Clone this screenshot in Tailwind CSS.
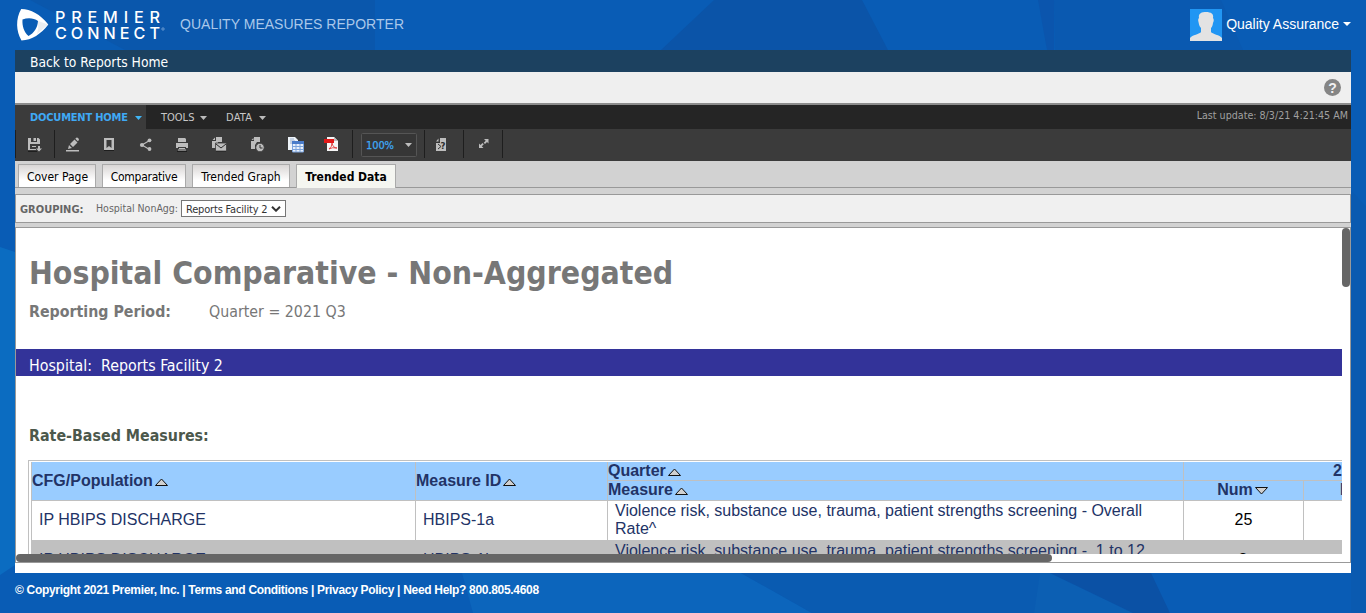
<!DOCTYPE html>
<html lang="en">
<head>
<meta charset="utf-8">
<title>Quality Measures Reporter</title>
<script src="https://cdn.jsdelivr.net/npm/@tailwindcss/browser@4"></script>
</head>
<body class="relative h-[613px] w-[1366px] overflow-hidden bg-[#0a5cb5] font-['Liberation_Sans',sans-serif]">
<svg class="absolute inset-0 -z-0" width="1366" height="613" aria-hidden="true">
  <rect width="1366" height="613" fill="#095cb5"/>
  <path d="M30 0H375V50H125Z" fill="#0a57ac"/>
  <path d="M714 0H862L888 50H661Z" fill="#0b54a8"/>
  <path d="M1038 0H1054V50H1047Z" fill="#0b55ad"/>
  <path d="M1054 0H1221L1243 50H1055Z" fill="#0a59b0"/>
  <path d="M0 247L15 252V565L0 575Z" fill="#0b6cc1"/>
  <path d="M1351 190L1366 207V613H1351Z" fill="#0a5ab0"/>
  <path d="M462 573H741L812 613H473Z" fill="#0c65bc"/>
  <path d="M741 573H1050L1130 613H812Z" fill="#0a5bb1"/>
  <path d="M1040 573H1050L1133 613H1034Z" fill="#0c5fb3"/>
  <path d="M1050 573H1151L1170 613H1133Z" fill="#0b51a5"/>
</svg>
<div class="relative flex h-[613px] flex-col px-[15px]">
  <header class="flex h-[50px] shrink-0 items-start">
    <svg class="mt-2 h-[34px] w-[150px] shrink-0" viewBox="15 8 150 34">
      <path fill="#fff" fill-rule="evenodd" d="M21.2 9C31 9.300 40 14 48.300 24.500C41 34 32 40 21.500 40.500C16 31 15.500 19 21.200 9ZM22.500 19.500C28 17.300 34 18 38 21C37.500 28 34 33 28.500 36C24 32 22 26 22.500 19.500Z"/>
      <path fill="#d6dbe4" d="M38 21L48 24.500L37 34Q39 28 38 21Z" opacity=".5"/>
      <g fill="#fff" font-family="Inter,sans-serif" font-size="16.200" font-weight="500">
        <text x="55" y="23.300" textLength="105">PREMIER</text>
        <text x="55" y="38.500" textLength="105">CONNECT</text>
      </g>
      <circle cx="163" cy="29" r="1.200" fill="none" stroke="#9fc0e4" stroke-width=".6"/>
    </svg>
    <div class="ml-[15px] mt-[14px] text-[14px] leading-5 tracking-[0.02px] whitespace-nowrap text-[#a9c8ea]">QUALITY MEASURES REPORTER</div>
    <div class="ml-auto flex pt-[9px]">
      <svg class="h-8 w-8" viewBox="0 0 32 32"><rect width="32" height="32" fill="#2196f3"/><path fill="#e3e3e3" d="M0 32V29C2 26 10 25 11 23V19C9 17 9 15 8.500 13C8 11 8 10 9 9C8 4 12 3 16 3C21 3 24 5 23 9C24 10 24 12 23 14C22.500 17 22 18 21 19V23C22 25 30 26 32 29V32Z"/></svg>
      <span class="ml-1 mt-[5px] text-[14px] leading-5 whitespace-nowrap text-white">Quality Assurance</span>
      <svg class="ml-1 mt-[13px] h-1 w-2" viewBox="0 0 8 4"><path d="M0 0H8L4 4Z" fill="#fff"/></svg>
    </div>
  </header>
  <main class="flex h-[523px] w-[1336px] shrink-0 flex-col bg-white font-['DejaVu_Sans_Condensed','DejaVu_Sans',sans-serif]">
    <nav class="h-[22px] shrink-0 bg-[#1c4160] pl-[15px] text-[13.750px] leading-[24px] text-white"><a>Back to Reports Home</a></nav>
    <div class="flex h-[33px] shrink-0 items-start justify-end border-b-2 border-[#8c8c8c] bg-[#efefef] pr-[10px] pt-[7px]">
      <svg class="h-[17px] w-[17px]" viewBox="0 0 17 17"><circle cx="8.500" cy="8.500" r="8.500" fill="#858585"/><text x="8.500" y="13.500" text-anchor="middle" font-family="Liberation Sans" font-size="14" font-weight="700" fill="#f1f1f1">?</text></svg>
    </div>
    <div class="flex h-[24px] shrink-0 items-stretch bg-[#252525] text-[11px] leading-[25px] text-[#c8c8c8]">
      <div class="flex w-[131px] items-center bg-[#3b3b3b] pl-[15px] font-bold text-[#3fa9f5]"><span class="tracking-[-0.2px] whitespace-nowrap">DOCUMENT HOME</span><svg class="ml-auto mr-1 mt-px h-1 w-[7px]" viewBox="0 0 7 4"><path d="M0 0H7L3.500 4Z" fill="#3fb5f5"/></svg></div>
      <div class="flex w-[65px] items-center pl-[15px]"><span>TOOLS</span><svg class="ml-auto mr-1 mt-px h-1 w-[7px]" viewBox="0 0 7 4"><path d="M0 0H7L3.500 4Z" fill="#bbb"/></svg></div>
      <div class="flex w-[59px] items-center pl-[15px]"><span class="tracking-[0.2px]">DATA</span><svg class="ml-auto mr-1 mt-px h-1 w-[7px]" viewBox="0 0 7 4"><path d="M0 0H7L3.500 4Z" fill="#bbb"/></svg></div>
      <div class="ml-auto pr-[3px] text-[10.640px] leading-[21px] whitespace-nowrap text-[#a0a0a0]">Last update: 8/3/21 4:21:45 AM</div>
    </div>
    <div class="flex h-[32px] shrink-0 bg-[#3b3b3b]">
      <svg class="h-8 w-[500px]" viewBox="15 129 500 32" fill="#bdbdbd">
        <g fill="#1e1e1e"><path d="M15 130h1v28h-1zM54 130h1v28h-1zM352 130h1v28h-1zM424 130h1v28h-1zM463 130h1v28h-1zM502 130h1v28h-1z"/></g>
        <path fill-rule="evenodd" d="M28 138h3v4h6v-4h1.500l1.500 1.500v4.500h-10v5h6v1h-8zM33.500 138h2.500v3h-2.500zM32 146h4v1h-4zM38 146h2v2.500h2l-3 3l-3-3h2z"/><path d="M28 151h9v1h-9z" fill="#1e1e1e"/>
        <path d="M66 150h13v1.500h-13zM68 149l1-4l3 3zM70 144l4.500-4.500l3 3l-4.500 4.500zM75.300 138.700l1-1q1-.5 2 .5t.5 2l-1 1z"/>
        <path fill-rule="evenodd" d="M104 138h10v12h-10zM106.500 140v8l2.500-2l2.500 2v-8z"/><path d="M104 150h10v1h-10z" fill="#1e1e1e"/>
        <path d="M142 145L149.500 140.500M142 145L149.500 149.500" stroke="#bdbdbd" stroke-width="1.100"/><circle cx="142" cy="145" r="2.100"/><circle cx="149.500" cy="140.300" r="1.900"/><circle cx="149.500" cy="149" r="1.900"/>
        <path fill-rule="evenodd" d="M178 138h7l1 1v3h-8zM176 143h12v5h-2v-1h-8v1h-2zM179 148h6v1h-6zM178 149.500h8v1h-8z"/><path d="M177 151h10v1h-10z" fill="#1e1e1e"/>
        <path d="M216 137h6v5h-4v6h-6v-7h4zM212.500 140l2.500-2.500v2.500z"/><path d="M215.500 143h11v8h-11z" stroke="#3b3b3b" stroke-width=".8"/><path d="M216 144l5 4l5-4M216 151.500h10" fill="none" stroke="#2b2b2b"/>
        <path d="M254 137h6v5h-3l-2 3v4h-4v-8h3zM251.500 140l2-2v2z"/><circle cx="260" cy="147.500" r="4.200" stroke="#3b3b3b" stroke-width=".8"/><path d="M260 145v3h2.500" stroke="#333" fill="none"/>
        <path d="M288 137h7l3 3v10h-10z" fill="#eef3f9"/><path d="M290 139h4M290 141h5M290 143h3" stroke="#9aafcc"/><path d="M292 141h12v11h-12z" fill="#e8f0fb"/><path d="M292 141h12v3h-12z" fill="#4a7cc9"/><path d="M292 146.500h12M292 149.500h12M296 144v8M300 144v8M292.500 144v8h11v-8" stroke="#7da4dc" fill="none"/>
        <path d="M327 137h7l4 4v10h-11z" fill="#f5f5f5"/><path d="M334 137v4h4z" fill="#bbb"/><path d="M324 139h10v4h-10z" fill="#e01818"/><path d="M329 149q3-2 3-6q1 5 5 5q-5-1-8 1" stroke="#d22" stroke-width=".8" fill="none"/>
        <rect x="361.500" y="133.500" width="55" height="23" rx="1" fill="#363636" stroke="#555"/><text x="366" y="149" font-size="11" textLength="28" fill="#3fa9f5" stroke="#3fa9f5" stroke-width=".25">100%</text><path d="M405 143h7l-3.500 4z"/>
        <path d="M440 138h6v13h-10v-8h4z"/><path d="M436 141.500l2.500-3v3z"/><path d="M436 142.500h4M438 144l3 2.500l-3 2.500" stroke="#333" fill="none"/><text x="440.500" y="149" font-size="9.500" font-weight="700" fill="#2c2c2c">?</text>
        <path d="M484 139h4.500v4.500l-1.500-1.500l-2 2l-1.300-1.300l2-2zM479 143.500l1.500 1.500l2-2l1.300 1.300l-2 2l1.700 1.700h-4.500z"/>
      </svg>
    </div>
    <div class="flex h-[27px] shrink-0 items-end border-b border-[#999] bg-[#d2d2d2] pl-[3px] text-[12px] leading-[25px] text-black">
      <div class="h-[23px] w-[78px] border border-b-0 border-[#aaa] bg-linear-to-b from-[#d9d6d5] to-white to-70% pl-px text-center whitespace-nowrap"><span>Cover Page</span></div>
      <div class="ml-[6px] h-[23px] w-[84px] border border-b-0 border-[#aaa] bg-linear-to-b from-[#d9d6d5] to-white to-70% text-center tracking-[-0.25px] whitespace-nowrap"><span>Comparative</span></div>
      <div class="ml-[6px] h-[23px] w-[98px] border border-b-0 border-[#aaa] bg-linear-to-b from-[#d9d6d5] to-white to-70% text-center whitespace-nowrap"><span>Trended Graph</span></div>
      <div class="-mb-px ml-[6px] h-6 w-[100px] border border-b-0 border-[#aaa] bg-[#f5f6f1] text-center font-bold whitespace-nowrap"><span>Trended Data</span></div>
    </div>
    <div class="h-[6px] shrink-0 bg-[#d2d2d2]"></div>
    <div class="flex h-[29px] shrink-0 items-center border border-[#999] bg-[#f0f0f0] pl-1 text-[#666]">
      <span class="w-[76px] pt-[3px] text-[11px] font-bold">GROUPING:</span>
      <span class="w-[85px] text-[10.500px] whitespace-nowrap">Hospital NonAgg:</span>
      <div class="flex h-[17px] w-[105px] items-center border border-[#767676] bg-white pl-1 text-[11px] text-[#333]"><span class="pt-[3px] tracking-[-0.18px] whitespace-nowrap">Reports Facility 2</span><svg class="ml-auto mr-1 h-[6px] w-[10px]" viewBox="0 0 10 6"><path d="M1 .7L5 4.700L9 .7" fill="none" stroke="#333" stroke-width="2"/></svg></div>
    </div>
    <div class="h-1 shrink-0 bg-[#d2d2d2]"></div>
    <section class="relative h-[336px] shrink-0 overflow-hidden border border-[#999] bg-white">
      <div class="flex h-[326px] w-[1326px] flex-col overflow-hidden">
        <h1 class="mt-[24px] h-[43px] shrink-0 pl-[13px] text-[31.700px] leading-[42px] font-bold whitespace-nowrap text-[#777]"><span>Hospital Comparative - Non-Aggregated</span></h1>
        <div class="flex h-[31px] shrink-0 pl-[13px] text-[15.800px] leading-[34px] whitespace-nowrap text-[#777]"><b class="w-[180px]">Reporting Period:</b><span>Quarter = 2021 Q3</span></div>
        <div class="mt-[23px] flex h-[27px] shrink-0 bg-[#333399] pl-[13px] text-[15.850px] leading-[33px] whitespace-nowrap text-white"><span class="w-[72px]">Hospital:</span><span>Reports Facility 2</span></div>
        <div class="mt-[45px] h-[28px] shrink-0 pl-[13px] text-[15.850px] leading-[29px] font-bold text-[#4c584c]"><span>Rate-Based Measures:</span></div>
        <div class="ml-3 mt-[11px] w-[1400px] shrink-0 border-l border-t border-[#c0c0c0] pl-[2px] pt-px font-['Liberation_Sans',sans-serif] text-[16px] text-[#223366]">
          <div class="grid grid-cols-[384px_192px_576px_120px_300px] grid-rows-[39px_39px_40px]">
            <div class="flex items-center border-b border-l border-[#c0c0c0] bg-[#99ccff] font-bold"><span>CFG/Population</span><svg class="ml-[2px] mt-[2px] h-2 w-[13px]" viewBox="0 0 13 8"><path d="M.5 7.500L6.500 1L12.500 7.500Z" fill="#d0d0d0" stroke="#111"/></svg></div>
            <div class="flex items-center border-b border-l border-[#c0c0c0] bg-[#99ccff] font-bold"><span>Measure ID</span><svg class="ml-[2px] mt-[2px] h-2 w-[13px]" viewBox="0 0 13 8"><path d="M.5 7.500L6.500 1L12.500 7.500Z" fill="#d0d0d0" stroke="#111"/></svg></div>
            <div class="flex flex-col border-b border-l border-[#c0c0c0] bg-[#99ccff] font-bold">
              <div class="flex h-[19px] items-center border-b border-[#c0c0c0] leading-[18px]">Quarter<svg class="ml-[2px] mt-[2px] h-2 w-[13px]" viewBox="0 0 13 8"><path d="M.5 7.500L6.500 1L12.500 7.500Z" fill="#d0d0d0" stroke="#111"/></svg></div>
              <div class="flex h-[18px] items-center leading-[18px]">Measure<svg class="ml-[2px] mt-[2px] h-2 w-[13px]" viewBox="0 0 13 8"><path d="M.5 7.500L6.500 1L12.500 7.500Z" fill="#d0d0d0" stroke="#111"/></svg></div>
            </div>
            <div class="col-span-2 flex flex-col border-b border-l border-[#c0c0c0] bg-[#99ccff] font-bold">
              <div class="h-[19px] border-b border-[#c0c0c0] pl-[149px] leading-[18px]">2021 Q3</div>
              <div class="flex h-[19px]"><div class="flex h-[18px] w-[119px] items-center justify-center pr-[2px] leading-[18px]">Num<svg class="ml-[2px] mt-[2px] h-2 w-[13px]" viewBox="0 0 13 8"><path d="M.5 .5L6.500 7L12.500 .5Z" fill="#d0d0d0" stroke="#111"/></svg></div><div class="flex-1 border-l border-[#c0c0c0] pl-[36px] leading-[18px]">Den</div></div>
            </div>
            <div class="flex items-center border-l border-[#c0c0c0] pl-[7px] pb-px">IP HBIPS DISCHARGE</div>
            <div class="flex items-center border-l border-[#c0c0c0] pl-[7px] pb-px">HBIPS-1a</div>
            <div class="border-l border-[#c0c0c0] pl-[7px] pt-px leading-[18px]">Violence risk, substance use, trauma, patient strengths screening - Overall<br>Rate^</div>
            <div class="flex items-center justify-center border-l border-[#c0c0c0] pb-px text-black">25</div>
            <div class="border-l border-[#c0c0c0]"></div>
            <div class="flex items-center bg-[#c0c0c0] pl-2">IP HBIPS DISCHARGE</div>
            <div class="flex items-center bg-[#c0c0c0] pl-2">HBIPS-1b</div>
            <div class="bg-[#c0c0c0] pl-2 pt-[2px] leading-[18px]">Violence risk, substance use, trauma, patient strengths screening -&nbsp; 1 to 12</div>
            <div class="flex items-center justify-center bg-[#c0c0c0] text-black">3</div>
            <div class="bg-[#c0c0c0]"></div>
          </div>
        </div>
      </div>
      <div class="absolute top-0 right-0 h-[59px] w-2 rounded-full bg-[#666]"></div>
      <div class="absolute bottom-0 left-0 h-2 w-[1036px] rounded-full bg-[#666]"></div>
    </section>
  </main>
  <footer class="pt-[9px] text-[12px] leading-4 font-bold whitespace-nowrap text-white"><span class="tracking-[-0.31px]">© Copyright 2021 Premier, Inc. | Terms and Conditions | Privacy Policy | Need Help? 800.805.4608</span></footer>
</div>
</body>
</html>
